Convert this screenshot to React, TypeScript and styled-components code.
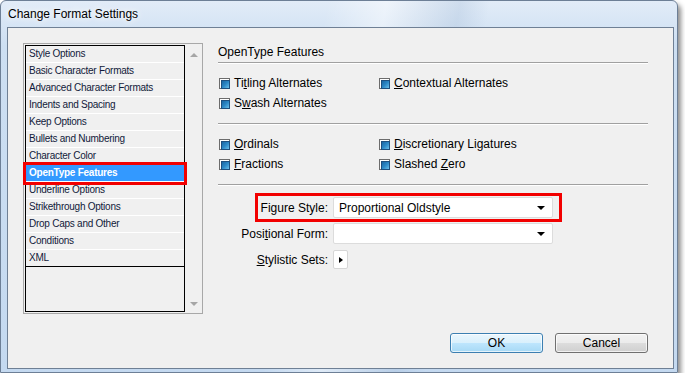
import React from "react";
import styled, { createGlobalStyle } from "styled-components";

const GlobalStyle = createGlobalStyle`
  html, body {
    margin: 0;
    padding: 0;
    background: #ffffff;
  }
  body {
    font-family: "Liberation Sans", Arial, sans-serif;
    color: #000;
  }
  * {
    box-sizing: border-box;
  }
`;

const Window = styled.div`
  width: 678px;
  height: 373px;
  display: flex;
  flex-direction: column;
  padding: 0 3px 3px 6px;
  border: 1px solid #6d7f96;
  border-radius: 6px 6px 0 0;
  background:
    linear-gradient(100deg, transparent 44%, rgba(255, 255, 255, 0.45) 52%, rgba(150, 175, 205, 0.25) 62%, transparent 66%),
    linear-gradient(180deg, #e2ecf8 0%, #cddff2 12%, #c4d9f0 100%);
  box-shadow: 3px 4px 5px rgba(0, 0, 0, 0.45);
`;

const TitleBar = styled.div`
  height: 26px;
  line-height: 26px;
  padding-left: 1px;
  font-size: 12px;
  color: #000;
  text-shadow: 0 0 6px #fff, 0 0 10px #fff;
`;

const Client = styled.div`
  flex: 1;
  display: flex;
  flex-direction: column;
  padding: 15px 25px 15px 15px;
  border: 1px solid #6f8095;
  background: #f0f0f0;
`;

const Main = styled.div`
  display: flex;
  gap: 15px;
  height: 271px;
`;

/* left category list */

const ListFrame = styled.div`
  width: 180px;
  height: 271px;
  display: flex;
  padding: 1px 0 1px 1px;
  border: 1px solid #a8a8a8;
`;

const Items = styled.div`
  width: 160px;
  border: 1px solid #000;
  display: flex;
  flex-direction: column;
`;

const Item = styled.div<{ $selected?: boolean }>`
  height: 17px;
  line-height: 16px;
  padding-left: 3px;
  font-size: 10px;
  letter-spacing: -0.25px;
  white-space: nowrap;
  border-bottom: 1px solid #ffffff;
  color: ${p => (p.$selected ? "#ffffff" : "#101a3a")};
  font-weight: ${p => (p.$selected ? "bold" : "normal")};
  background: ${p => (p.$selected ? "#3399ff" : "transparent")};
  outline: ${p => (p.$selected ? "3px solid #f20000" : "none")};

  &:last-child {
    border-bottom-color: #000;
  }
`;

const ScrollTrack = styled.div`
  flex: 1;
  display: flex;
  flex-direction: column;
  justify-content: space-between;
  align-items: center;
  padding: 8px 0 6px;
`;

const Arrow = styled.div<{ $dir: "up" | "down" }>`
  width: 0;
  height: 0;
  border-left: 4px solid transparent;
  border-right: 4px solid transparent;
  ${p =>
    p.$dir === "up"
      ? "border-bottom: 4px solid #a6a6a6;"
      : "border-top: 4px solid #a6a6a6;"}
`;

/* right feature panel */

const Panel = styled.div`
  flex: 1;
  display: flex;
  flex-direction: column;
`;

const PanelTitle = styled.div`
  height: 20px;
  line-height: 19px;
  font-size: 12px;
  border-bottom: 1px solid #a0a0a0;
  box-shadow: 0 1px 0 #fff;
`;

const CheckGroup = styled.div`
  display: grid;
  grid-template-columns: 160px 160px;
  grid-auto-rows: 20px;
  padding: 10px 0 10px 1px;
  border-bottom: 1px solid #a0a0a0;
  box-shadow: 0 1px 0 #fff;
`;

const Check = styled.label`
  display: flex;
  align-items: center;
  gap: 4px;
  font-size: 12px;
  color: #000;
`;

const Box = styled.span`
  width: 11px;
  height: 11px;
  padding: 1px;
  border: 1px solid #6c6c6c;
  background: #fff;

  &::after {
    content: "";
    display: block;
    width: 100%;
    height: 100%;
    border: 1px solid #1f4f7e;
    background: linear-gradient(135deg, #1a66a3 0%, #2d88c6 50%, #6cc0ea 100%);
  }
`;

const Mn = styled.span`
  text-decoration: underline;
`;

const Form = styled.div`
  display: flex;
  flex-direction: column;
  align-items: flex-start;
  gap: 5px;
  padding-top: 12px;
`;

const FormRow = styled.div`
  position: relative;
  display: flex;
  align-items: center;
  gap: 5px;
  height: 21px;
`;

const FieldLabel = styled.span`
  width: 110px;
  text-align: right;
  font-size: 12px;
`;

const Select = styled.div`
  width: 220px;
  height: 21px;
  display: flex;
  align-items: center;
  justify-content: space-between;
  padding: 0 7px 0 5px;
  border: 1px solid #dcdcdc;
  border-radius: 2px;
  background: #fff;
  font-size: 12px;
`;

const DropArrow = styled.span`
  width: 0;
  height: 0;
  border-left: 4px solid transparent;
  border-right: 4px solid transparent;
  border-top: 4px solid #000;
`;

const SmallButton = styled.div`
  width: 15px;
  height: 19px;
  display: flex;
  align-items: center;
  justify-content: center;
  border: 1px solid #d6d6d6;
  border-radius: 2px;
  background: #fff;

  &::after {
    content: "";
    border-top: 3px solid transparent;
    border-bottom: 3px solid transparent;
    border-left: 4px solid #000;
  }
`;

const Highlight = styled.div`
  position: absolute;
  left: 37px;
  right: -9px;
  top: -4px;
  bottom: -4px;
  border: 3px solid #f20000;
  pointer-events: none;
`;

/* footer buttons */

const Footer = styled.div`
  margin-top: auto;
  display: flex;
  justify-content: flex-end;
  gap: 12px;
`;

const Button = styled.button<{ $default?: boolean }>`
  width: 93px;
  height: 20px;
  padding: 0;
  font-family: "Liberation Sans", Arial, sans-serif;
  font-size: 12px;
  color: #000;
  border-radius: 3px;
  border: 1px solid ${p => (p.$default ? "#3c7fb1" : "#707070")};
  box-shadow: inset 0 0 0 1px rgba(255, 255, 255, 0.7);
  background: ${p =>
    p.$default
      ? "linear-gradient(#eaf6fd 0%, #d9f0fc 50%, #bee6fd 50%, #a7d9f5 100%)"
      : "linear-gradient(#f2f2f2 0%, #ebebeb 50%, #dddddd 50%, #cfcfcf 100%)"};
`;

const categories = [
  "Style Options",
  "Basic Character Formats",
  "Advanced Character Formats",
  "Indents and Spacing",
  "Keep Options",
  "Bullets and Numbering",
  "Character Color",
  "OpenType Features",
  "Underline Options",
  "Strikethrough Options",
  "Drop Caps and Other",
  "Conditions",
  "XML",
];

const App: React.FC = () => {
  return (
    <>
      <GlobalStyle />
      <Window>
        <TitleBar>Change Format Settings</TitleBar>
        <Client>
          <Main>
            <ListFrame>
              <Items>
                {categories.map(c => (
                  <Item key={c} $selected={c === "OpenType Features"}>
                    {c}
                  </Item>
                ))}
              </Items>
              <ScrollTrack>
                <Arrow $dir="up" />
                <Arrow $dir="down" />
              </ScrollTrack>
            </ListFrame>

            <Panel>
              <PanelTitle>OpenType Features</PanelTitle>
              <CheckGroup>
                <Check>
                  <Box />
                  <span>Ti<Mn>t</Mn>ling Alternates</span>
                </Check>
                <Check>
                  <Box />
                  <span><Mn>C</Mn>ontextual Alternates</span>
                </Check>
                <Check>
                  <Box />
                  <span>S<Mn>w</Mn>ash Alternates</span>
                </Check>
              </CheckGroup>
              <CheckGroup>
                <Check>
                  <Box />
                  <span><Mn>O</Mn>rdinals</span>
                </Check>
                <Check>
                  <Box />
                  <span><Mn>D</Mn>iscretionary Ligatures</span>
                </Check>
                <Check>
                  <Box />
                  <span><Mn>F</Mn>ractions</span>
                </Check>
                <Check>
                  <Box />
                  <span>Slashed <Mn>Z</Mn>ero</span>
                </Check>
              </CheckGroup>
              <Form>
                <FormRow>
                  <FieldLabel>Fi<Mn>g</Mn>ure Style:</FieldLabel>
                  <Select>
                    <span>Proportional Oldstyle</span>
                    <DropArrow />
                  </Select>
                  <Highlight />
                </FormRow>
                <FormRow>
                  <FieldLabel>Posi<Mn>t</Mn>ional Form:</FieldLabel>
                  <Select>
                    <span />
                    <DropArrow />
                  </Select>
                </FormRow>
                <FormRow>
                  <FieldLabel><Mn>S</Mn>tylistic Sets:</FieldLabel>
                  <SmallButton />
                </FormRow>
              </Form>
            </Panel>
          </Main>
          <Footer>
            <Button $default>OK</Button>
            <Button>Cancel</Button>
          </Footer>
        </Client>
      </Window>
    </>
  );
};

export default App;
